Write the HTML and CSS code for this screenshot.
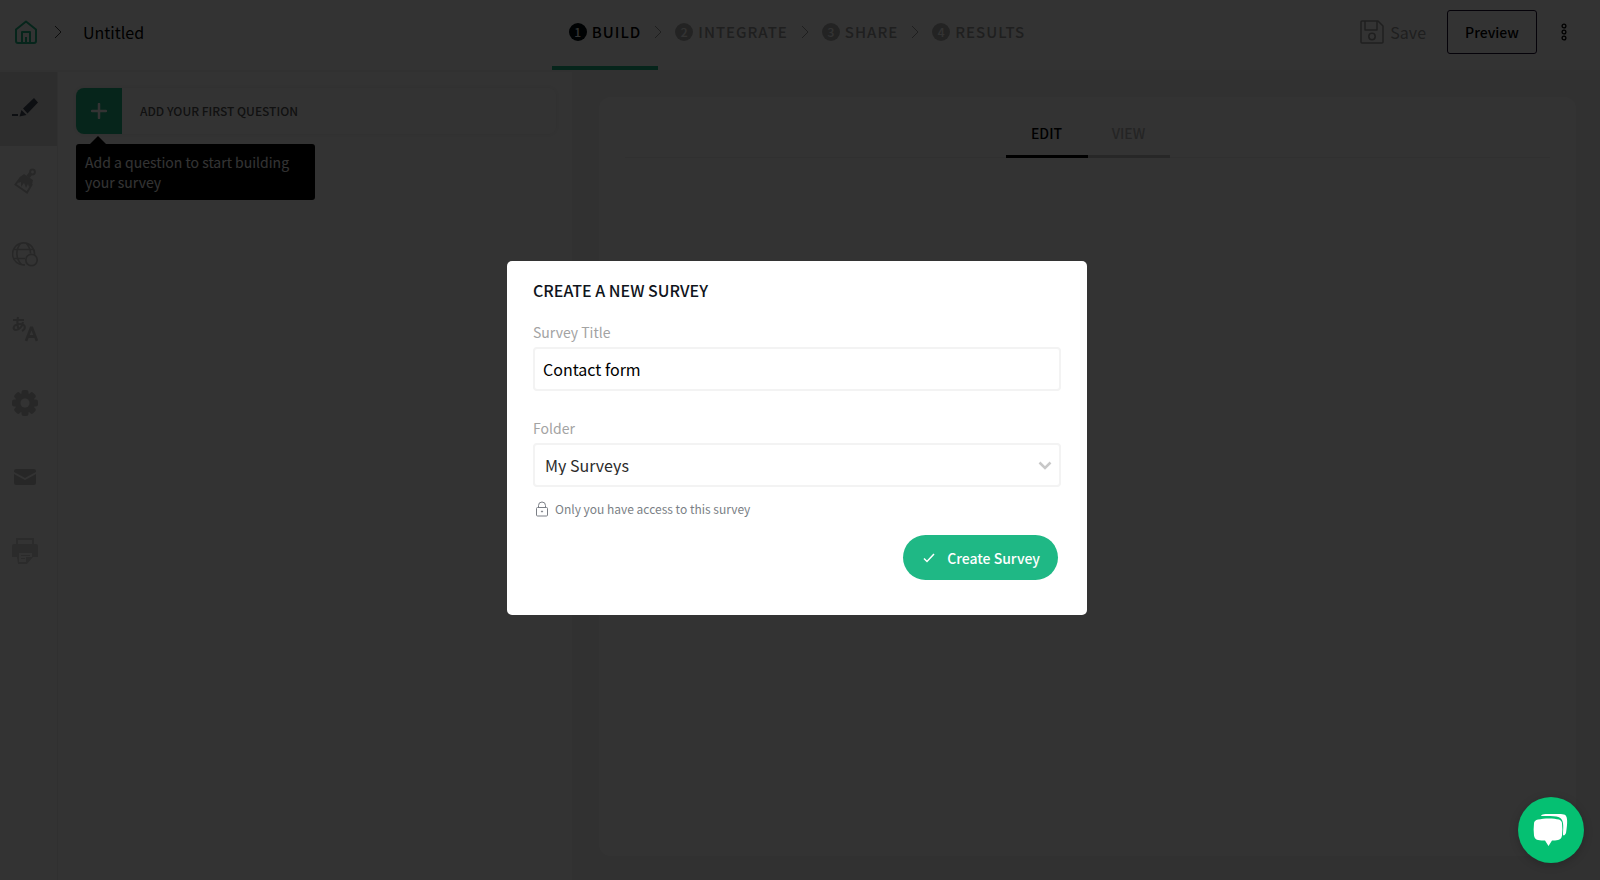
FILE: index.html
```html
<!DOCTYPE html>
<html lang="en">
<head>
  <meta charset="UTF-8" />
  <meta name="viewport" content="width=device-width, initial-scale=1.0"/>
  <title>Untitled - Survey Builder</title>
  <link rel="stylesheet" href="styles.css">
</head>
<body>
  <header class="topbar">
    <div class="crumbs">
      <a href="#" class="home" aria-label="Home">
        <svg width="24" height="24" viewBox="0 0 24 24" fill="none" stroke="currentColor" stroke-width="2" stroke-linejoin="round"><path d="M2 9.500L12 1.500l10 8V21a2 2 0 0 1-2 2H4a2 2 0 0 1-2-2z"/><path d="M8 23V12h8v11M12 17v6"/></svg>
      </a>
      <svg class="chevron" width="8" height="14" viewBox="0 0 8 14"><path d="M1 1l6 6-6 6"/></svg>
      <span class="survey-name">Untitled</span>
    </div>

    <nav class="steps">
      <a href="#" class="step active"><span class="num">1</span>BUILD</a>
      <a href="#" class="step"><svg class="chevron" width="8" height="14" viewBox="0 0 8 14"><path d="M1 1l6 6-6 6"/></svg><span class="num">2</span>INTEGRATE</a>
      <a href="#" class="step"><svg class="chevron" width="8" height="14" viewBox="0 0 8 14"><path d="M1 1l6 6-6 6"/></svg><span class="num">3</span>SHARE</a>
      <a href="#" class="step"><svg class="chevron" width="8" height="14" viewBox="0 0 8 14"><path d="M1 1l6 6-6 6"/></svg><span class="num">4</span>RESULTS</a>
    </nav>

    <div class="actions">
      <button type="button" class="save-btn">
        <svg width="24" height="24" viewBox="0 0 24 24" fill="none" stroke="currentColor" stroke-width="1.500" stroke-linejoin="round"><path d="M1 2a1 1 0 0 1 1-1h16l5 5v16a1 1 0 0 1-1 1H2a1 1 0 0 1-1-1z"/><path d="M5 1v9h12V1"/><circle cx="12" cy="16.500" r="3.200"/></svg>
        Save
      </button>
      <button type="button" class="preview-btn">Preview</button>
      <button type="button" class="more-btn" aria-label="More">
        <svg width="6" height="18" viewBox="0 0 6 18" fill="none" stroke="currentColor" stroke-width="1.300"><circle cx="3" cy="3" r="1.900"/><circle cx="3" cy="9" r="1.900"/><circle cx="3" cy="15" r="1.900"/></svg>
      </button>
    </div>
  </header>

  <div class="workspace">
    <nav class="sidebar">
      <a href="#" class="side-item active" aria-label="Edit">
        <svg width="26" height="26" viewBox="0 0 26 26" fill="currentColor"><path d="M0 20h6v2H0zM9.500 16l5 5-7 1.500zM11 14.500L22 4l4 4.500L15.500 19.500z"/></svg>
      </a>
      <a href="#" class="side-item" aria-label="Design">
        <svg width="26" height="26" viewBox="0 0 26 26" fill="none" stroke="currentColor" stroke-width="2"><path d="M9 9L3.500 16.500 15 24.500 20 16"/><path fill="currentColor" stroke="none" d="M8 9l4-3 9 6-1 5-3 2-1-3-2 4-2-5-3 4 0-5-3 1z"/><path stroke-width="4" d="M16 9l3-4"/><circle cx="20.500" cy="4" r="2.400"/></svg>
      </a>
      <a href="#" class="side-item" aria-label="Domain">
        <svg width="26" height="26" viewBox="0 0 26 26" fill="none" stroke="currentColor" stroke-width="1.700"><path d="M13 22.800A11 11 0 1 1 22.500 13"/><path d="M2 7.500h19M1 16.500h12M8.500 1.500c-5 6-5 15 1 21M14.500 1.500c2.500 3 4 6.500 4 10"/><circle cx="19.500" cy="18" r="5.700"/></svg>
      </a>
      <a href="#" class="side-item" aria-label="Translate">
        <svg width="26" height="26" viewBox="0 0 26 26" fill="none" stroke="currentColor" stroke-width="2.200"><path d="M1 4h11M6 1c-1 5-1 9 1 13M11 6c-1 5-4 8-7 8-4 0-3-6 4-6 6 0 6 5 2 7"/><path stroke-width="2.800" d="M14 25l5-13h1l5 13M16 20.500h7"/></svg>
      </a>
      <a href="#" class="side-item" aria-label="Settings">
        <svg width="26" height="26" viewBox="0 0 26 26"><g fill="currentColor"><rect x="9.500" y="0" width="7" height="26" rx="2"/><rect x="9.500" y="0" width="7" height="26" rx="2" transform="rotate(45 13 13)"/><rect x="9.500" y="0" width="7" height="26" rx="2" transform="rotate(90 13 13)"/><rect x="9.500" y="0" width="7" height="26" rx="2" transform="rotate(135 13 13)"/><circle cx="13" cy="13" r="10"/></g><circle cx="13" cy="13" r="4.500" fill="#fff"/></svg>
      </a>
      <a href="#" class="side-item" aria-label="Messages">
        <svg width="26" height="26" viewBox="0 0 26 26" fill="currentColor"><path d="M2 7a2 2 0 0 1 2-2h18a2 2 0 0 1 2 2v1l-11 6L2 8z"/><path d="M2 10l11 6 11-6v9a2 2 0 0 1-2 2H4a2 2 0 0 1-2-2z"/></svg>
      </a>
      <a href="#" class="side-item faded" aria-label="Print">
        <svg width="26" height="26" viewBox="0 0 26 26" fill="currentColor"><path fill-rule="evenodd" d="M4 0h18v6h2a2 2 0 0 1 2 2v11h-5l-6 7H6l-1-7H0V8a2 2 0 0 1 2-2h2zM6 2v4h14V2zM7 15v9h7v-5h6v-4z"/><path d="M9 17h9v1H9zM9 20h4v1H9z"/></svg>
      </a>
    </nav>

    <section class="questions">
      <button type="button" class="add-question">
        <span class="plus"><svg width="16" height="16" viewBox="0 0 16 16" stroke="#fff" stroke-width="2.500" stroke-linecap="round"><path d="M8 1v14M1 8h14"/></svg></span>
        <span class="add-text">ADD YOUR FIRST QUESTION</span>
      </button>
      <div class="tooltip" role="tooltip">Add a question to start building your survey</div>
    </section>

    <main class="preview-area">
      <div class="preview-card">
        <div class="tabs">
          <button type="button" class="tab active">EDIT</button>
          <button type="button" class="tab">VIEW</button>
        </div>
      </div>
    </main>
  </div>

  <div class="overlay">
    <div class="modal" role="dialog" aria-modal="true" aria-labelledby="modalTitle">
      <h2 id="modalTitle">CREATE A NEW SURVEY</h2>
      <form id="createForm">
        <label for="surveyTitle">Survey Title</label>
        <input type="text" id="surveyTitle" value="Contact form" />

        <label for="folder">Folder</label>
        <div class="select-group">
          <select id="folder">
            <option>My Surveys</option>
          </select>
          <svg class="arrow" width="14" height="9" viewBox="0 0 14 9"><path d="M1.500 1.500L7 7l5.500-5.500"/></svg>
        </div>

        <p class="access-note">
          <svg width="12" height="16" viewBox="0 0 12 16" fill="none" stroke="currentColor"><rect x="0.500" y="6.500" width="11" height="8.500" rx="1"/><path d="M2.500 6.500V4.500a3.500 3.500 0 0 1 7 0v2"/><circle cx="6" cy="10.500" r="0.600" fill="currentColor"/></svg>
          Only you have access to this survey
        </p>

        <button type="submit" class="create-btn">
          <svg width="12" height="10" viewBox="0 0 12 10" fill="none" stroke="#fff" stroke-width="1.500"><path d="M1 5.500L4 8.500 11 1"/></svg>
          Create Survey
        </button>
      </form>
    </div>
  </div>

  <button type="button" class="chat-btn" aria-label="Open chat">
    <svg width="36" height="34" viewBox="0 0 36 34" fill="#fff"><path d="M8 3C9 1 11 1 20 1c9 0 12 0 13 2 2 3 1 11 0 17-1 2-2 3-3 2 0-5 1-11-1-15C27 3 23 3 8 3z"/><path d="M5 6.500c6-1.500 16-1.500 21 0 2 1 3 2 3 4 .5 4 .5 8 0 12-.5 3-2 4-4 4.500-2 .5-4 .5-6 .5L15.500 33 12 27.500c-2 0-5 0-7-.5-2.500-.5-3.500-2-4-4.500-.5-4-.5-8 0-12 0-2 1.500-3.500 4-4z"/></svg>
  </button>

  <script>
    document.getElementById("createForm").addEventListener("submit", (e) => {
      e.preventDefault();
      document.querySelector(".overlay").style.display = "none";
    });
  </script>
</body>
</html>
```

FILE: styles.css
```css
* {
  box-sizing: border-box;
  margin: 0;
  padding: 0;
}
body {
  display: flex;
  flex-direction: column;
  min-height: 100vh;
  background: #fff;
  color: #000;
  font-family: 'Noto Sans CJK SC', 'Open Sans', sans-serif;
  font-size: 16px;
  line-height: 20px;
}
button, input, select {
  font: inherit;
  color: inherit;
  background: none;
  border: none;
}
button {
  cursor: pointer;
}
a {
  color: inherit;
  text-decoration: none;
}
svg {
  display: block;
  flex-shrink: 0;
}
.chevron {
  fill: none;
  stroke: #777;
  stroke-width: 1;
}

/* Top bar */
.topbar {
  display: grid;
  grid-template-columns: 1fr auto 1fr;
  align-items: center;
  height: 72px;
  padding: 0 20px 0 14px;
  border-bottom: 2px solid #f4f4f4;
}
.crumbs {
  display: flex;
  align-items: center;
  margin-bottom: 6px;
}
.home {
  color: #1fb885;
}
.crumbs .chevron {
  margin: 0 21px 0 16px;
  stroke: #444;
}
.steps {
  display: flex;
  align-self: stretch;
}
.step {
  position: relative;
  display: flex;
  align-items: center;
  gap: 5px;
  padding: 0 17px 2px;
  border-bottom: 4px solid transparent;
  color: #9a9a9a;
  font-size: 15px;
  font-weight: 500;
  letter-spacing: 1px;
}
.step.active {
  color: #000;
  border-color: #1fb885;
}
.step .chevron {
  position: absolute;
  left: -4px;
  stroke: #999;
}
.num {
  display: flex;
  align-items: center;
  justify-content: center;
  width: 18px;
  height: 18px;
  border-radius: 50%;
  background: #b0b0b0;
  color: #fff;
  font-size: 12px;
  letter-spacing: 0;
}
.active .num {
  background: #000a10;
}
.actions {
  display: flex;
  align-items: center;
  justify-content: flex-end;
  margin: 0 13px 6px 0;
}
.save-btn {
  display: flex;
  align-items: center;
  gap: 6px;
  margin-right: 21px;
  color: #999;
}
.preview-btn {
  width: 90px;
  height: 44px;
  margin-right: 24px;
  border: 1px solid #1c0a30;
  border-radius: 3px;
  font-size: 14px;
  font-weight: 500;
}

/* Builder */
.workspace {
  display: flex;
  flex: 1;
}
.sidebar {
  width: 58px;
  border-right: 1px solid #f0f0f0;
}
.side-item {
  display: flex;
  align-items: center;
  height: 74px;
  padding: 0 0 4px 12px;
  color: #c4c4c4;
}
.side-item.active {
  background: #dedede;
  color: #444a5a;
}
.side-item.faded {
  color: #d4d4d4;
}
.questions {
  flex: 0 0 514px;
  padding: 16px 16px 0 18px;
}
.add-question {
  display: flex;
  align-items: center;
  width: 100%;
  height: 46px;
  border-radius: 8px;
  box-shadow: 0 0 6px rgba(0, 0, 0, 0.1);
  overflow: hidden;
}
.plus {
  display: flex;
  align-items: center;
  justify-content: center;
  width: 46px;
  height: 46px;
  background: #1fb885;
}
.add-text {
  margin-left: 18px;
  color: #555;
  font-size: 12px;
  font-weight: 500;
}
.tooltip {
  position: relative;
  width: 239px;
  margin-top: 10px;
  padding: 8px 9px;
  border-radius: 3px;
  background: #000;
  color: #fff;
  font-size: 14px;
}
.tooltip::before {
  content: "";
  position: absolute;
  top: -8px;
  left: 14px;
  border: 8px solid transparent;
  border-top: none;
  border-bottom-color: #000;
}
.preview-area {
  display: flex;
  flex: 1;
  padding: 25px 24px 24px 27px;
  background: #f4f4f4;
}
.preview-card {
  flex: 1;
  padding: 13px 26px;
  border-radius: 12px;
  background: #fff;
}
.tabs {
  display: flex;
  justify-content: center;
  border-bottom: 1px solid #eee;
}
.tab {
  width: 82px;
  height: 48px;
  margin-bottom: -1px;
  border-bottom: 3px solid #c0c0c0;
  color: #b5b5b5;
  font-size: 14px;
  font-weight: 500;
}
.tab.active {
  border-color: #000;
  color: #000;
}

/* Create survey dialog */
.overlay {
  position: fixed;
  inset: 0;
  display: flex;
  align-items: center;
  justify-content: center;
  padding: 0 6px 4px 0;
  background: rgba(0, 0, 0, 0.8);
}
.modal {
  width: 580px;
  max-width: 95%;
  padding: 19px 26px 35px;
  border-radius: 5px;
  background: #fff;
}
.modal h2 {
  margin-bottom: 22px;
  color: #10151c;
  font-size: 16px;
  font-weight: 500;
}
.modal label {
  display: block;
  margin-bottom: 5px;
  color: #a3a3a3;
  font-size: 14px;
}
.modal input, .modal select {
  display: block;
  width: 100%;
  height: 44px;
  padding: 0 8px;
  border: 2px solid #f3f3f3;
  border-radius: 4px;
  font-size: 16px;
}
.modal input {
  margin-bottom: 27px;
  outline: none;
}
.select-group {
  position: relative;
}
.modal select {
  appearance: none;
  padding: 0 10px;
  color: #2b2b2b;
}
.arrow {
  position: absolute;
  right: 9px;
  top: 18px;
  fill: none;
  stroke: #c8c8c8;
  stroke-width: 2.5;
  pointer-events: none;
}
.access-note {
  display: flex;
  align-items: center;
  gap: 7px;
  margin: 12px 3px 16px;
  color: #7b7f86;
  font-size: 12px;
}
.create-btn {
  display: flex;
  align-items: center;
  gap: 12px;
  height: 45px;
  margin: 0 3px 0 auto;
  padding: 0 18px 0 20px;
  border-radius: 23px;
  background: #1fb885;
  color: #fff;
  font-size: 14px;
  font-weight: 500;
}

.chat-btn {
  position: fixed;
  right: 16px;
  bottom: 17px;
  display: flex;
  align-items: center;
  justify-content: center;
  width: 66px;
  height: 66px;
  border-radius: 50%;
  background: #05c072;
  box-shadow: 0 2px 10px rgba(0, 0, 0, 0.2);
}
```
